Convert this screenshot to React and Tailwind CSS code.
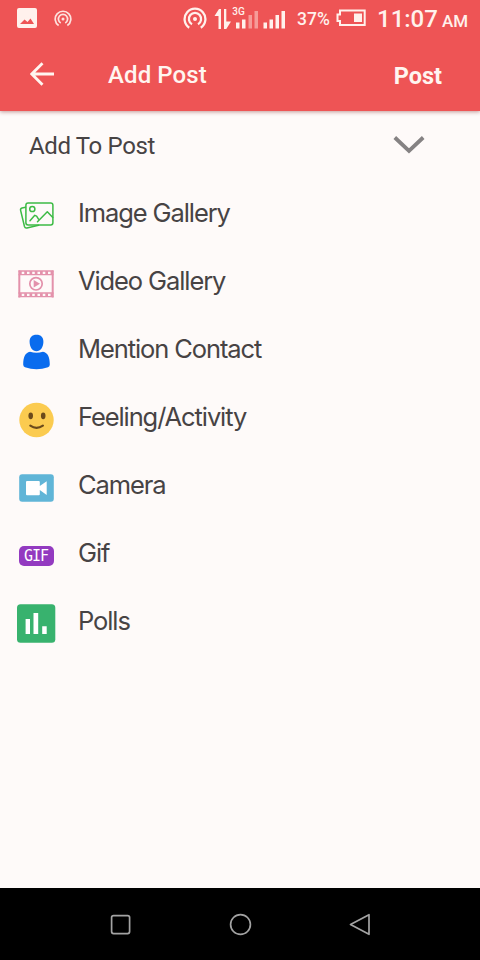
import React from 'react';

const ImageGalleryIcon = () => (
    <svg viewBox="0 0 40 40" className="w-10 h-10 shrink-0" fill="none" stroke="#3dbb45" strokeWidth="1.5" strokeLinecap="round" strokeLinejoin="round">
        <rect x="9.9" y="8" width="27" height="22" rx="2.2" />
        <path d="M9.5 12.3 L6 13 Q4.2 13.5 4.6 15.3 L8.5 31.5 Q9 33.3 10.9 32.9 L22.5 30.3" />
        <circle cx="16.3" cy="14" r="2.6" />
        <path d="M14 25.8 L18.8 20.3 L20.6 21.2 L22.5 24.2 M21.5 26.8 L31.3 16.8 L36.8 22.5" />
    </svg>
);

const VideoGalleryIcon = () => (
    <svg viewBox="0 0 40 40" className="w-10 h-10 shrink-0" fill="none" stroke="#e391ab">
        <path d="M3.3 7.5 V34.5 M36.7 7.5 V34.5" strokeWidth="2" />
        <path d="M2.5 8 H37.5 M2.5 11.7 H37.5 M2.5 30 H37.5 M2.5 33.7 H37.5" strokeWidth="1.3" />
        <path d="M3 9.8 H37.5 M3 31.9 H37.5" strokeWidth="3.4" strokeDasharray="2.7 2.56" />
        <circle cx="20" cy="20.8" r="6.2" strokeWidth="1.7" />
        <path d="M17.7 17 L24 20.8 L17.7 24.6 Z" fill="#e391ab" stroke="none" />
    </svg>
);

const ContactIcon = () => (
    <svg viewBox="0 0 40 40" className="w-10 h-10 shrink-0" fill="#0a6cee">
        <path d="M20.5 3.7 C25 3.7 27.6 6.4 27.4 11 C27.2 16.5 24.5 20.2 20.5 20.2 C16.5 20.2 13.8 16.5 13.6 11 C13.4 6.4 16 3.7 20.5 3.7 Z" />
        <path d="M14 20.8 Q20.5 22.6 27 20.8 C32 22 33.7 26 33.8 33.5 Q33.8 35.6 32 36.3 Q20.5 40.3 9 36.3 Q7.2 35.6 7.2 33.5 C7.3 26 9 22 14 20.8 Z" />
    </svg>
);

const SmileIcon = () => (
    <svg viewBox="0 0 40 40" className="w-10 h-10 shrink-0">
        <circle cx="20.5" cy="21" r="17.2" fill="#fbcb50" />
        <ellipse cx="14.7" cy="16.8" rx="2.3" ry="3.4" fill="#6b4a1b" />
        <ellipse cx="27.2" cy="16.8" rx="2.3" ry="3.4" fill="#6b4a1b" />
        <path d="M14.3 26.6 Q20.5 31 26.9 26.6" fill="none" stroke="#6b4a1b" strokeWidth="2.2" strokeLinecap="round" />
    </svg>
);

const CameraIcon = () => (
    <svg viewBox="0 0 40 40" className="w-10 h-10 shrink-0">
        <rect x="3.2" y="7.2" width="34.6" height="27.6" rx="3" fill="#60b5d7" />
        <path d="M10 15 Q10 14 11 14 H22.8 Q23.8 14 23.8 15 V19 L30.7 14.3 V27.9 L23.8 23 V27.2 Q23.8 28.2 22.8 28.2 H11 Q10 28.2 10 27.2 Z" fill="#fff" />
    </svg>
);

const GifIcon = () => (
    <div className="w-10 h-10 shrink-0 flex items-center justify-center pt-0.5">
        <span className="w-[35px] h-5 rounded-[5px] bg-[#933ac0] text-white text-[15px] leading-5 text-center tracking-[-1px] font-['DejaVu_Sans_Mono',monospace]">GIF</span>
    </div>
);

const PollsIcon = () => (
    <svg viewBox="0 0 40 40" className="w-10 h-10 shrink-0">
        <rect x="1" y="1.3" width="38.3" height="38.5" rx="3.5" fill="#38b26e" />
        <path d="M9.6 16 H14 V31 H9.6 Z M17.5 10 H22.2 V31 H17.5 Z M26.2 23.3 H30.7 V31 H26.2 Z" fill="#fff" />
    </svg>
);

const options = [
    { label: 'Image Gallery', Icon: ImageGalleryIcon },
    { label: 'Video Gallery', Icon: VideoGalleryIcon },
    { label: 'Mention Contact', Icon: ContactIcon },
    { label: 'Feeling/Activity', Icon: SmileIcon },
    { label: 'Camera', Icon: CameraIcon },
    { label: 'Gif', Icon: GifIcon },
    { label: 'Polls', Icon: PollsIcon },
];

const HotspotIcon = ({ className }) => (
    <svg viewBox="0 0 24 24" className={className} fill="none" stroke="currentColor" strokeWidth="2.3">
        <path d="M6.2 20.7 A10.4 10.4 0 1 1 17.8 20.7" />
        <path d="M9 17.3 A6.1 6.1 0 1 1 15 17.3" />
        <circle cx="12" cy="12" r="2" fill="currentColor" stroke="none" />
    </svg>
);

function StatusBar() {
    return (
        <div className="h-[37px] flex items-center text-[#fff1ec]">
            <svg viewBox="0 0 20 20" className="w-5 h-5 ml-[17px] -mt-0.5">
                <path fill="currentColor" fillRule="evenodd" d="M2 0 H18 Q20 0 20 2 V18 Q20 20 18 20 H2 Q0 20 0 18 V2 Q0 0 2 0 Z M3 16 H17 L13.5 10.5 L10.5 14 L7.5 11.5 Z" />
            </svg>
            <HotspotIcon className="w-[18px] h-[18px] ml-[17px] opacity-90" />
            <HotspotIcon className="w-6 h-6 ml-[111px]" />
            <svg viewBox="0 0 72 24" className="w-[72px] h-6 ml-[7px]" fill="currentColor">
                <path d="M0.5 9 L5 2 H7 V22 H4.5 V9 Z M10 2 H12.3 V14.5 H17 L12.3 22 H10 Z" />
                <path d="M22 15.5 H25.5 V21.5 H22 Z M28 12.5 H31.5 V21.5 H28 Z" />
                <path d="M34.5 8 H38 V21.5 H34.5 Z M40.5 4 H44 V21.5 H40.5 Z" opacity="0.45" />
                <path d="M49.5 15.5 H53 V21.5 H49.5 Z M55.5 12.5 H59 V21.5 H55.5 Z M61.5 8 H65 V21.5 H61.5 Z M67.5 4 H71 V21.5 H67.5 Z" />
                <text x="18.3" y="7.5" fontSize="10" fontWeight="500" fontFamily="Roboto, sans-serif">3G</text>
            </svg>
            <span className="ml-[11px] w-[34px] pt-0.5 text-[17.5px] whitespace-nowrap font-medium">37%</span>
            <svg viewBox="0 0 31 18" className="w-[31px] h-[18px] ml-[5px] -mt-0.5">
                <path d="M4 1.5 H28.7 V16 H4 V12 H1.5 V5.5 H4 Z" fill="none" stroke="currentColor" strokeWidth="2" />
                <path d="M18 4.5 H26 V13 H18 Z" fill="currentColor" />
            </svg>
            <div className="ml-[10px] pt-px flex items-baseline gap-1 leading-none font-medium whitespace-nowrap">
                <span className="text-[24px]">11:07</span>
                <span className="text-[17px]">AM</span>
            </div>
        </div>
    );
}

function Header() {
    return (
        <header className="h-[74px] flex items-center text-[#fff5f0]">
            <svg viewBox="0 0 24 24" className="w-6 h-6 ml-[30px]" fill="none" stroke="currentColor" strokeWidth="2.8">
                <path d="M24 12 H2 M12.5 1.2 L1.8 12 L12.5 22.8" />
            </svg>
            <h1 className="ml-[54px] pt-0.5 text-[24px] tracking-[0.1px] font-medium">Add Post</h1>
            <button className="ml-auto mr-[38px] pt-1.5 text-[23.5px] font-bold">Post</button>
        </header>
    );
}

function NavBar() {
    return (
        <nav className="h-[72px] bg-black">
            <svg viewBox="0 0 480 72" className="w-full h-full" fill="none" stroke="#a3a3a3" strokeWidth="1.7" strokeLinejoin="round">
                <rect x="111.6" y="27.6" width="18" height="18" rx="2" />
                <circle cx="240.5" cy="36.5" r="9.9" />
                <path d="M350.5 36.5 L369 26.7 V46.3 Z" />
            </svg>
        </nav>
    );
}

export default function App() {
    return (
        <div className="w-[480px] h-[960px] flex flex-col overflow-hidden bg-[#fefaf9] font-['Roboto',sans-serif]">
            <div className="bg-[#ee5455] shadow-[0_1px_4px_rgba(120,30,30,0.45)]">
                <StatusBar />
                <Header />
            </div>
            <main className="flex-1">
                <div className="h-[70px] flex items-center justify-between pl-[29px] pr-[55px] text-[#474344]">
                    <h2 className="text-[24px] tracking-[-0.35px]">Add To Post</h2>
                    <svg viewBox="0 0 32 20" className="w-8 h-5 -mt-0.5" fill="none" stroke="#858283" strokeWidth="3.8">
                        <path d="M1.8 2.5 L16 16 L30.2 2.5" />
                    </svg>
                </div>
                <ul>
                    {options.map(({ label, Icon }) => (
                        <li key={label} className="h-[68px] flex items-center gap-[22px] pl-4">
                            <Icon />
                            <span className="pb-1 text-[25.5px] tracking-[-1.1px] text-[#474344] whitespace-nowrap font-['Inter',sans-serif]">{label}</span>
                        </li>
                    ))}
                </ul>
            </main>
            <NavBar />
        </div>
    );
}
